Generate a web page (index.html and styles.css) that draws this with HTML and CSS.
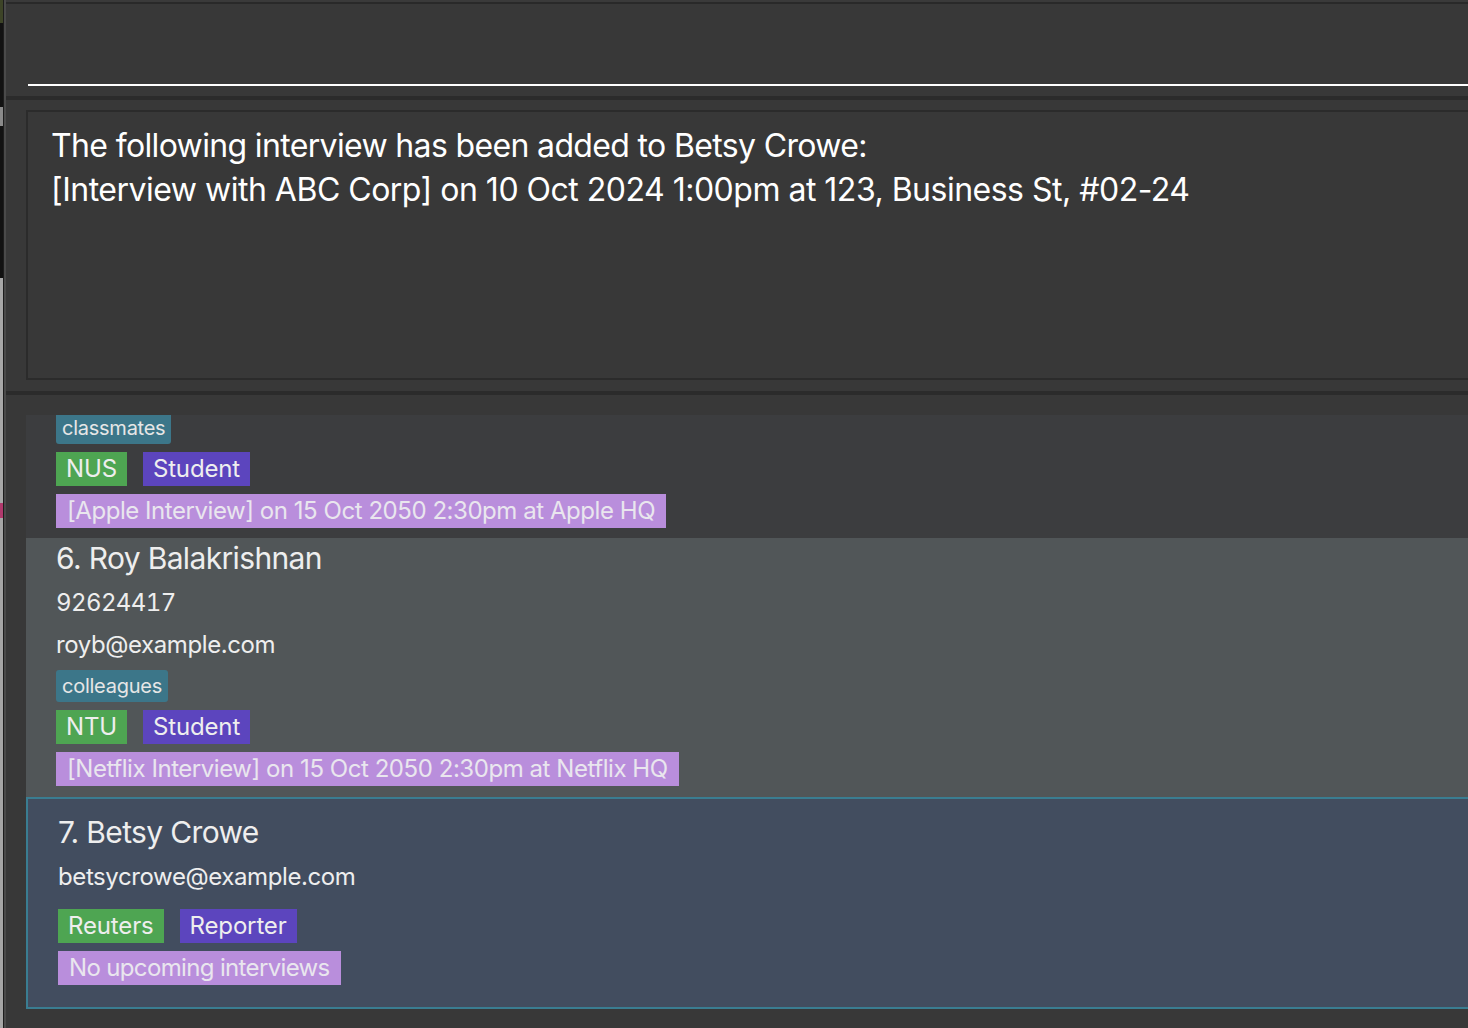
FILE: index.html
```html
<!DOCTYPE html>
<html lang="en">
<head>
<meta charset="utf-8">
<title>Address Book</title>
<link rel="stylesheet" href="styles.css">
</head>
<body>
<div class="screen">
  <div class="desk">
    <div class="seg seg-olive"></div>
    <div class="seg seg-black1"></div>
    <div class="seg seg-grey"></div>
    <div class="seg seg-black2"></div>
    <div class="seg seg-light1"></div>
    <div class="seg seg-pink"></div>
    <div class="seg seg-light2"></div>
  </div>
  <div class="frame-edge"></div>
  <main class="window">
    <div class="win-top"></div>
    <header class="command">
      <div class="command-field"></div>
    </header>
    <div class="sep"></div>
    <section class="result">
      <div class="result-box">
        <p class="result-line">The following interview has been added to Betsy Crowe:</p>
        <p class="result-line">[Interview with ABC Corp] on 10 Oct 2024 1:00pm at 123, Business St, #02-24</p>
      </div>
    </section>
    <div class="sep sep-low"></div>
    <section class="list-pane">
      <div class="list">
        <div class="cell cell-odd cell-cut">
          <div class="cat-row"><span class="cat">classmates</span></div>
          <div class="tag-row"><span class="tag tag-org">NUS</span><span class="tag tag-role">Student</span></div>
          <div class="tag-row"><span class="tag tag-iv">[Apple Interview] on 15 Oct 2050 2:30pm at Apple HQ</span></div>
        </div>
        <div class="cell cell-even">
          <div class="name">6. Roy Balakrishnan</div>
          <div class="field field-phone">92624417</div>
          <div class="field">royb@example.com</div>
          <div class="cat-row cat-row-top"><span class="cat">colleagues</span></div>
          <div class="tag-row"><span class="tag tag-org">NTU</span><span class="tag tag-role">Student</span></div>
          <div class="tag-row"><span class="tag tag-iv">[Netflix Interview] on 15 Oct 2050 2:30pm at Netflix HQ</span></div>
        </div>
        <div class="cell cell-selected">
          <div class="name">7. Betsy Crowe</div>
          <div class="field">betsycrowe@example.com</div>
          <div class="tag-row tag-row-first"><span class="tag tag-org">Reuters</span><span class="tag tag-role">Reporter</span></div>
          <div class="tag-row"><span class="tag tag-iv tag-none">No upcoming interviews</span></div>
        </div>
      </div>
    </section>
  </main>
</div>
</body>
</html>
```
FILE: styles.css
```css
* { box-sizing: border-box; }
html, body { margin: 0; padding: 0; }
body {
  background: #383838;
  font-family: Inter, "Noto Sans", "Liberation Sans", sans-serif;
  color: #eeeeee;
  overflow: hidden;
}
.screen {
  display: flex;
  width: 1468px;
  height: 1028px;
  overflow: hidden;
}
.desk {
  width: 3px;
  display: flex;
  flex-direction: column;
  flex: none;
}
.seg-olive { height: 23px; background: #3d4427; }
.seg-black1 { height: 84px; background: #121212; }
.seg-grey { height: 19px; background: #8a8a8a; }
.seg-black2 { height: 152px; background: #121212; }
.seg-light1 { height: 225px; background: #a8a8a8; }
.seg-pink { height: 15px; background: #b0396c; }
.seg-light2 { flex: 1; background: #a6a6a6; }
.frame-edge {
  width: 3px;
  flex: none;
  background: #4a4a4a;
  border-left: 1px solid #1d1d1d;
}
.window {
  flex: 1;
  min-width: 0;
  background: #383838;
  display: flex;
  flex-direction: column;
  overflow: hidden;
}
.win-top {
  height: 4px;
  background: #3a3a3a;
  border-bottom: 2px solid #292929;
}
.command {
  height: 92px;
  padding: 0 0 0 22px;
}
.command-field {
  height: 82px;
  border-bottom: 2px solid #ffffff;
  margin-right: -10px;
}
.sep {
  height: 4px;
  background: #2b2b2b;
}
.result {
  padding: 10px 0 11px 20px;
}
.result-box {
  height: 270px;
  border: 2px solid #2b2b2b;
  margin-right: -10px;
  padding: 12px 24px 11px 23px;
}
.result-line {
  margin: 0;
  font-size: 32px;
  line-height: 44px;
  letter-spacing: -0.65px;
  color: #ffffff;
  white-space: nowrap;
}
.result-line + .result-line { letter-spacing: -0.5px; }
.list-pane {
  flex: 1;
  padding: 20px 0 0 20px;
}
.list {
  overflow: hidden;
  margin-right: -10px;
}
.cell {
  padding: 2px 30px 11px 30px;
}
.cell-odd { background: #3c3d3f; }
.cell-even { background: #515658; }
.cell-cut {
  margin-top: -3px;
  padding-top: 0;
  padding-bottom: 10px;
}
.cell-selected {
  background: #424d5f;
  border: 2px solid #3a7d91;
  padding: 15px 30px 22px 30px;
}
.name {
  font-size: 30px;
  line-height: 36px;
  letter-spacing: -0.65px;
  white-space: nowrap;
}
.field {
  font-size: 24px;
  line-height: 42px;
  letter-spacing: -0.4px;
  white-space: nowrap;
}
.field-phone {
  font-variant-numeric: tabular-nums;
  letter-spacing: -0.6px;
}
.name + .field { margin-top: 6px; }
.cat-row {
  display: flex;
}
.cat-row-top { margin-top: 4px; }
.cat {
  display: inline-block;
  background: #3c7689;
  color: #e6e6e6;
  font-size: 20px;
  line-height: 32px;
  height: 32px;
  padding: 0 6px;
  letter-spacing: -0.25px;
  border-radius: 3px;
}
.tag-row {
  display: flex;
  gap: 16px;
  margin-top: 8px;
}
.tag-row-first { margin-top: 11px; }
.tag {
  display: inline-block;
  font-size: 24px;
  line-height: 34px;
  height: 34px;
  padding: 0 10px;
  letter-spacing: -0.15px;
  color: #eeeeee;
  white-space: nowrap;
}
.tag-org { background: #4ea552; }
.tag-role { background: #5c45be; }
.tag-iv {
  background: #b98edc;
  color: #e9e6ee;
  padding: 0 11px;
  letter-spacing: -0.45px;
}
.tag-none { letter-spacing: -0.65px; }
```
